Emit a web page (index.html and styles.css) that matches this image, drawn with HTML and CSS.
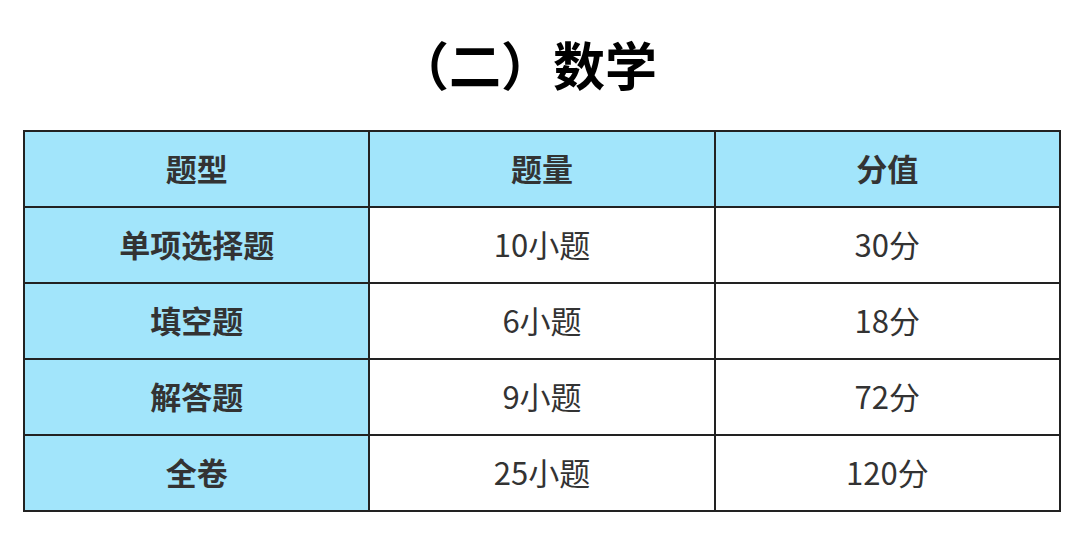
FILE: index.html
```html
<!DOCTYPE html>
<html lang="zh">
<head>
<meta charset="utf-8">
<link rel="stylesheet" href="styles.css">
</head>
<body>
<div class="page">
  <h1 class="title">（二）数学</h1>
  <table class="score">
    <tr class="head"><th>题型</th><th>题量</th><th>分值</th></tr>
    <tr><th>单项选择题</th><td>10小题</td><td>30分</td></tr>
    <tr><th>填空题</th><td>6小题</td><td>18分</td></tr>
    <tr><th>解答题</th><td>9小题</td><td>72分</td></tr>
    <tr><th>全卷</th><td>25小题</td><td>120分</td></tr>
  </table>
</div>
</body>
</html>
```
FILE: styles.css
```css
html, body { margin: 0; padding: 0; background: #fff; }
.page {
  width: 1080px;
  height: 547px;
  font-family: "Noto Sans CJK SC", "Noto Sans", sans-serif;
}
.title {
  margin: 0;
  height: 130px;
  line-height: 128px;
  padding-right: 26px;
  text-align: center;
  font-size: 52px;
  font-weight: 700;
  color: #000;
}
.score {
  margin-left: 23px;
  width: 1038px;
  border-collapse: collapse;
  table-layout: fixed;
}
.score th, .score td {
  height: 71px;
  border: 2px solid #222;
  text-align: center;
  vertical-align: middle;
  font-size: 31px;
  color: #333;
  padding: 0 0 3px;
  line-height: 1;
}
.score th { font-weight: 700; background: #a2e5fb; }
.score td { font-weight: 400; background: #fff; }
```
